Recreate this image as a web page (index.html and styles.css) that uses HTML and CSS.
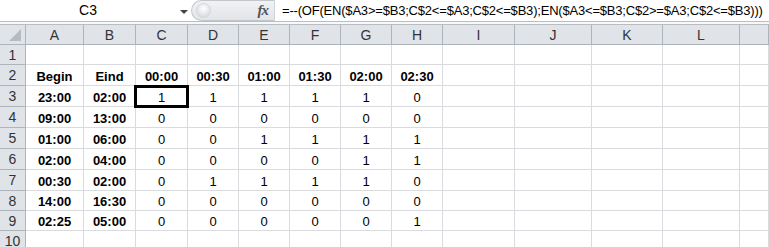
FILE: index.html
```html
<!doctype html>
<html>
<head>
  <title>Blad1</title>
  <link rel="stylesheet" href="styles.css">
</head>
<body>

	<div class="formula-bar">
		<div class="name-box">C3</div>
		<div class="name-drop"><span class="arrow"></span></div>
		<div class="fx-panel">
			<span class="knob"></span>
			<span class="fx">fx</span>
		</div>
		<div class="formula">=--(OF(EN($A3&gt;=$B3;C$2&lt;=$A3;C$2&lt;=$B3);EN($A3&lt;=$B3;C$2&gt;=$A3;C$2&lt;=$B3)))</div>
	</div>
	<div class="split"></div>

	<div class="sheet">
		<div class="hd corner"><span class="tri"></span></div>
		<div class="hd col">A</div><div class="hd col">B</div><div class="hd col">C</div><div class="hd col">D</div>
		<div class="hd col">E</div><div class="hd col">F</div><div class="hd col">G</div><div class="hd col">H</div>
		<div class="hd col">I</div><div class="hd col">J</div><div class="hd col">K</div><div class="hd col">L</div>
		<div class="hd col last"></div>

		<div class="hd row">1</div>
		<div class="c"></div><div class="c"></div><div class="c"></div><div class="c"></div><div class="c"></div><div class="c"></div>
		<div class="c"></div><div class="c"></div><div class="c"></div><div class="c"></div><div class="c"></div><div class="c"></div><div class="c"></div>

		<div class="hd row">2</div>
		<div class="c b">Begin</div><div class="c b">Eind</div><div class="c b">00:00</div><div class="c b">00:30</div>
		<div class="c b">01:00</div><div class="c b">01:30</div><div class="c b">02:00</div><div class="c b">02:30</div>
		<div class="c"></div><div class="c"></div><div class="c"></div><div class="c"></div><div class="c"></div>

		<div class="hd row">3</div>
		<div class="c b">23:00</div><div class="c b">02:00</div><div class="c active">1</div><div class="c">1</div>
		<div class="c">1</div><div class="c">1</div><div class="c">1</div><div class="c">0</div>
		<div class="c"></div><div class="c"></div><div class="c"></div><div class="c"></div><div class="c"></div>

		<div class="hd row">4</div>
		<div class="c b">09:00</div><div class="c b">13:00</div><div class="c">0</div><div class="c">0</div>
		<div class="c">0</div><div class="c">0</div><div class="c">0</div><div class="c">0</div>
		<div class="c"></div><div class="c"></div><div class="c"></div><div class="c"></div><div class="c"></div>

		<div class="hd row">5</div>
		<div class="c b">01:00</div><div class="c b">06:00</div><div class="c">0</div><div class="c">0</div>
		<div class="c">1</div><div class="c">1</div><div class="c">1</div><div class="c">1</div>
		<div class="c"></div><div class="c"></div><div class="c"></div><div class="c"></div><div class="c"></div>

		<div class="hd row">6</div>
		<div class="c b">02:00</div><div class="c b">04:00</div><div class="c">0</div><div class="c">0</div>
		<div class="c">0</div><div class="c">0</div><div class="c">1</div><div class="c">1</div>
		<div class="c"></div><div class="c"></div><div class="c"></div><div class="c"></div><div class="c"></div>

		<div class="hd row">7</div>
		<div class="c b">00:30</div><div class="c b">02:00</div><div class="c">0</div><div class="c">1</div>
		<div class="c">1</div><div class="c">1</div><div class="c">1</div><div class="c">0</div>
		<div class="c"></div><div class="c"></div><div class="c"></div><div class="c"></div><div class="c"></div>

		<div class="hd row">8</div>
		<div class="c b">14:00</div><div class="c b">16:30</div><div class="c">0</div><div class="c">0</div>
		<div class="c">0</div><div class="c">0</div><div class="c">0</div><div class="c">0</div>
		<div class="c"></div><div class="c"></div><div class="c"></div><div class="c"></div><div class="c"></div>

		<div class="hd row">9</div>
		<div class="c b">02:25</div><div class="c b">05:00</div><div class="c">0</div><div class="c">0</div>
		<div class="c">0</div><div class="c">0</div><div class="c">0</div><div class="c">1</div>
		<div class="c"></div><div class="c"></div><div class="c"></div><div class="c"></div><div class="c"></div>

		<div class="hd row">10</div>
		<div class="c"></div><div class="c"></div><div class="c"></div><div class="c"></div><div class="c"></div><div class="c"></div>
		<div class="c"></div><div class="c"></div><div class="c"></div><div class="c"></div><div class="c"></div><div class="c"></div><div class="c"></div>
	</div>

</body>
</html>
```

FILE: styles.css
```css
html, body {height: 100%}
body {
	margin: 0;
	padding: 0;
	overflow: hidden;
	background: #fff;
	font-family: "Liberation Sans", Arial, sans-serif;
	color: #000;
}

/* formula bar */
.formula-bar {
	display: flex;
	height: 21px;
	background: #fff;
	font-size: 13px;
}
.name-box {
	width: 176px;
	line-height: 21px;
	text-align: center;
	font-size: 14px;
}
.name-drop {
	width: 15px;
	display: flex;
	align-items: center;
	justify-content: center;
}
.name-drop .arrow {
	width: 0;
	height: 0;
	border-left: 4px solid transparent;
	border-right: 4px solid transparent;
	border-top: 4px solid #444;
	margin-top: 2px;
}
.fx-panel {
	width: 84px;
	display: flex;
	align-items: center;
	justify-content: space-between;
	box-sizing: border-box;
	border: 1px solid #c3c7cc;
	border-right-color: #d0d3d7;
	border-radius: 11px 0 0 11px;
	background: linear-gradient(#f1f2f4, #e2e4e8);
	padding: 0 6px 0 4px;
}
.knob {
	width: 13px;
	height: 13px;
	border-radius: 50%;
	background: radial-gradient(circle at 50% 35%, #ffffff, #dcdfe3 70%, #c9cdd2);
	border: 1px solid #d3d6da;
}
.fx {
	font-family: "Liberation Serif", "Times New Roman", serif;
	font-style: italic;
	font-weight: bold;
	font-size: 15px;
	color: #555;
	letter-spacing: -1px;
}
.formula {
	flex: 1;
	padding-left: 7px;
	line-height: 21px;
	white-space: nowrap;
	overflow: hidden;
	letter-spacing: -0.2px;
}
.split {
	height: 2px;
	border-top: 1px solid #b8bdc4;
	border-bottom: 1px solid #b8bdc4;
	background: #f7f8f9;
}

/* grid */
.sheet {
	display: grid;
	grid-template-columns: 26px 58px 52px 52px 51px 51px 51px 51px 51px 72px 77px 71px 77px 1fr;
	grid-template-rows: 20px 20px 21px 21px 21px 21px 21px 21px 20px 20px 20px;
	font-size: 13px;
}
.sheet > div {
	box-sizing: border-box;
	display: flex;
	align-items: center;
	justify-content: center;
	border-right: 1px solid #d9dbde;
	border-bottom: 1px solid #d9dbde;
}
.sheet > .hd {
	background: #e0e4e9;
	color: #333;
	font-size: 14px;
	border-right-color: #aeb4bc;
	border-bottom-color: #aeb4bc;
}
.hd.col {
	padding-top: 1px;
}
.hd.row {
	align-items: flex-start;
	padding-top: 2px;
}
.corner {
	position: relative;
}
.corner .tri {
	position: absolute;
	right: 4px;
	bottom: 3px;
	width: 0;
	height: 0;
	border-left: 12px solid transparent;
	border-bottom: 12px solid #b6bbc2;
}
.c {
	padding-top: 2px;
}
.c.b {
	font-weight: bold;
}
.c.active {
	position: relative;
}
.c.active::after {
	content: "";
	position: absolute;
	left: -2px;
	top: -1px;
	right: -2px;
	bottom: -2px;
	border: 3px solid #000;
}
```
